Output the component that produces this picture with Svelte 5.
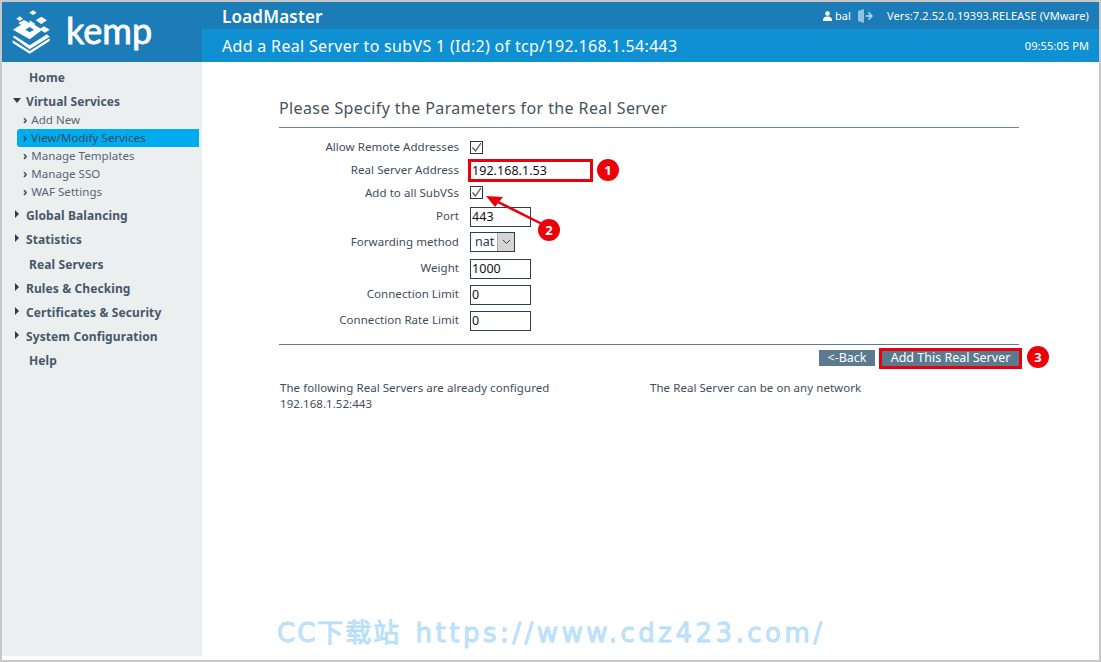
<script>
  const menu = [
    { label: 'Home', plain: true },
    { label: 'Virtual Services', open: true, items: [
      { label: 'Add New' },
      { label: 'View/Modify Services', active: true },
      { label: 'Manage Templates' },
      { label: 'Manage SSO' },
      { label: 'WAF Settings' }
    ] },
    { label: 'Global Balancing' },
    { label: 'Statistics' },
    { label: 'Real Servers', plain: true, nudge: true },
    { label: 'Rules & Checking' },
    { label: 'Certificates & Security' },
    { label: 'System Configuration' },
    { label: 'Help', plain: true }
  ];
</script>

{#snippet tick()}
  <svg width="11" height="11" viewBox="0 0 11 11"><path d="M1.500 5.500l3 3.500 5.500-8" fill="none" stroke="#555" stroke-width="1.300" /></svg>
{/snippet}

<div class="frame">
  <header class="top">
    <div class="logo">
      <svg width="50" height="50" viewBox="0 0 150 150">
        <g fill="#fff">
          <path d="M75 10l11 7-11 7-11-7z" />
          <path d="M100 29l17 11-17 11-17-11z" />
          <path d="M35 28l10 7-10 7-10-7z" />
          <path d="M65 40l17 11-3 2 24 15-38 29-50-29 24-15-8-5 17-9 17 9z" />
          <path d="M108 58l17 10-14 9-17-10z" />
          <path d="M14 90l6-4 45 29 52-33 8 7-60 38z" />
          <path d="M14 100l51 32 60-38v8l-60 38-51-32z" />
        </g>
        <path d="M65 60l13 8-13 8-13-8z" fill="#1b7cb8" />
      </svg>
      <span class="kemp">kemp</span>
    </div>
    <div class="bars">
      <div class="bar-a">
        <span class="product">LoadMaster</span>
        <span class="meta">
          <svg class="user" width="9" height="10" viewBox="0 0 9 10"><circle cx="4.500" cy="2.500" r="2.300" fill="#fff" /><path d="M0 10c0-3.500 1.500-4.500 4.500-4.500S9 6.500 9 10z" fill="#fff" /></svg>
          <span>bal</span>
          <svg class="logout" width="15" height="14" viewBox="0 0 15 14"><path d="M0 2l6-2v14l-6-2z" fill="#8cc4e8" /><path d="M8 7h5M10.500 3.500L14 7l-3.500 3.500" fill="none" stroke="#b8dcf2" stroke-width="1.500" /></svg>
          <span class="vers">Vers:7.2.52.0.19393.RELEASE (VMware)</span>
        </span>
      </div>
      <div class="bar-b">
        <span class="title">Add a Real Server to subVS 1 (Id:2) of tcp/192.168.1.54:443</span>
        <span class="clock">09:55:05 PM</span>
      </div>
    </div>
  </header>

  <div class="body">
    <nav class="side">
      {#each menu as m}
        <div class="group" class:plain={m.plain} class:nudge={m.nudge}>
          {#if !m.plain}
            <span class="caret" class:down={m.open}></span>
          {/if}
          {m.label}
        </div>
        {#if m.items}
          <div class="subs">
            {#each m.items as s}
              <div class="sub" class:active={s.active}><span class="chev">›</span>{s.label}</div>
            {/each}
          </div>
        {/if}
      {/each}
    </nav>

    <main class="main">
      <h1>Please Specify the Parameters for the Real Server</h1>

      <div class="form">
        <div class="row r-check"><label>Allow Remote Addresses</label><span class="check">{@render tick()}</span></div>
        <div class="row r-addr">
          <label>Real Server Address</label>
          <span class="field wide marked">192.168.1.53</span>
          <span class="num n1">1</span>
        </div>
        <div class="row r-check2">
          <label>Add to all SubVSs</label>
          <span class="check up">{@render tick()}</span>
          <svg class="arrow" width="62" height="36" viewBox="0 0 62 36">
            <path d="M58 30L10 6" stroke="#e8000b" stroke-width="2.500" fill="none" />
            <path d="M2 2l17 1-8 10z" fill="#e8000b" />
          </svg>
          <span class="num n2">2</span>
        </div>
        <div class="row r-port"><label>Port</label><span class="field">443</span></div>
        <div class="row r-fwd">
          <label>Forwarding method</label>
          <span class="select">
            <span class="sel-val">nat</span>
            <span class="sel-btn"><svg width="9" height="6" viewBox="0 0 9 6"><path d="M1 1l3.500 3.500L8 1" fill="none" stroke="#444" /></svg></span>
          </span>
        </div>
        <div class="row r-num"><label>Weight</label><span class="field">1000</span></div>
        <div class="row r-num"><label>Connection Limit</label><span class="field">0</span></div>
        <div class="row r-num"><label>Connection Rate Limit</label><span class="field">0</span></div>
      </div>

      <div class="actions">
        <button class="btn back">&lt;-Back</button>
        <button class="btn add">Add This Real Server</button>
        <span class="num n3">3</span>
      </div>

      <div class="notes">
        <div class="note-l">The following Real Servers are already configured<br />192.168.1.52:443</div>
        <div class="note-r">The Real Server can be on any network</div>
      </div>

      <div class="mark">CC下载站 <span class="url">https://www.cdz423.com/</span></div>
    </main>
  </div>
</div>

<style>
  :global(body) {
    margin: 0;
    background: #fff;
  }

  .frame {
    box-sizing: border-box;
    width: 1101px;
    height: 662px;
    border: 2px solid #c9c9c9;
    font-family: "Noto Sans", "Open Sans", sans-serif;
    font-size: 11.5px;
    letter-spacing: 0.05px;
    color: #4a5a6a;
    display: flex;
    flex-direction: column;
    overflow: hidden;
  }

  .top {
    display: flex;
    height: 60px;
    background: #1b7cb8;
    color: #fff;
  }

  .logo {
    width: 200px;
    display: flex;
    align-items: center;
    padding-left: 6px;
    box-sizing: border-box;
    gap: 8px;
  }

  .kemp {
    font-family: Lato, "Open Sans", sans-serif;
    font-size: 36px;
    line-height: 44px;
    letter-spacing: 0;
    margin-top: -5px;
    -webkit-text-stroke: 0.8px #fff;
  }

  .bars {
    flex: 1;
    display: flex;
    flex-direction: column;
  }

  .bar-a {
    height: 27px;
    display: flex;
    align-items: center;
    justify-content: space-between;
    padding: 0 10px 0 20px;
  }

  .product {
    font-size: 17px;
    font-weight: 600;
    letter-spacing: 0.2px;
    margin-top: 2px;
  }

  .meta {
    display: flex;
    align-items: center;
    font-size: 11px;
    letter-spacing: 0.1px;
  }

  .user {
    margin-right: 3px;
  }

  .logout {
    margin: 0 14px 0 7px;
  }

  .bar-b {
    flex: 1;
    background: #0f90d3;
    display: flex;
    align-items: center;
    justify-content: space-between;
    padding: 0 10px 0 20px;
  }

  .title {
    font-size: 16px;
    letter-spacing: 0.32px;
  }

  .clock {
    font-size: 11px;
    letter-spacing: 0.1px;
  }

  .body {
    flex: 1;
    display: flex;
    position: relative;
    min-height: 0;
  }

  .side {
    width: 200px;
    box-sizing: border-box;
    height: 594px;
    background: #ebeff0;
    padding-top: 7px;
  }

  .group {
    height: 24px;
    line-height: 17px;
    font-size: 12px;
    font-weight: 700;
    color: #47586a;
    padding-left: 24px;
    position: relative;
    letter-spacing: 0.1px;
  }

  .group.plain {
    padding-left: 27px;
  }

  .group.nudge {
    margin-top: 1px;
  }

  .caret {
    position: absolute;
    left: 13px;
    top: 3px;
    border-left: 4px solid #2f3d4b;
    border-top: 4px solid transparent;
    border-bottom: 4px solid transparent;
  }

  .caret.down {
    left: 11px;
    top: 5px;
    border-top: 5px solid #2f3d4b;
    border-left: 4px solid transparent;
    border-right: 4px solid transparent;
    border-bottom: 0;
  }

  .subs {
    margin-top: -6px;
    margin-bottom: 6px;
  }

  .sub {
    height: 18px;
    line-height: 17px;
    margin-left: 15px;
    width: 182px;
    box-sizing: border-box;
    padding-left: 6px;
    color: #566675;
  }

  .sub.active {
    background: #00acf0;
    border-radius: 3px 0 0 3px;
    color: #3b4a58;
  }

  .chev {
    font-weight: 700;
    margin-right: 4px;
    color: #3b4a58;
  }

  .main {
    flex: 1;
    padding: 35px 0 0 77px;
    position: relative;
    color: #3e4d5c;
  }

  h1 {
    margin: 0;
    width: 740px;
    box-sizing: border-box;
    height: 31px;
    font-size: 16px;
    font-weight: 400;
    line-height: 22px;
    color: #47525c;
    letter-spacing: 0.39px;
    border-bottom: 1px solid #6b8494;
  }

  .form {
    width: 740px;
    height: 217px;
    box-sizing: border-box;
    padding-top: 8px;
    border-bottom: 1px solid #5f7c8c;
  }

  .row {
    display: flex;
    align-items: center;
    position: relative;
  }

  .r-check { height: 23px; }
  .r-addr { height: 23px; }
  .r-check2 { height: 23px; }
  .r-port { height: 23px; }
  .r-fwd { height: 28px; }
  .r-num { height: 26px; }

  label {
    width: 180px;
    text-align: right;
    margin-right: 11px;
    margin-bottom: 2px;
    flex: none;
  }

  .r-num label {
    margin-bottom: 4px;
  }

  .check {
    width: 11px;
    height: 11px;
    border: 1px solid #333;
    background: #fff;
    display: flex;
  }

  .check.up {
    margin-bottom: 2px;
  }

  .field {
    box-sizing: border-box;
    width: 61px;
    height: 20px;
    border: 1px solid #2c4054;
    padding-left: 1px;
    font-size: 12.5px;
    line-height: 18px;
    color: #111;
    background: #fff;
  }

  .field.wide {
    width: 125px;
    height: 23px;
    margin-left: -2px;
    line-height: 17px;
    padding-left: 1px;
  }

  .marked {
    border: 3px solid #e8000b;
  }

  .select {
    display: flex;
    width: 45px;
    height: 20px;
    box-sizing: border-box;
    border: 1px solid #2c4054;
    color: #2c3a48;
    font-size: 12.5px;
    line-height: 18px;
  }

  .sel-val {
    flex: 1;
    padding-left: 4px;
  }

  .sel-btn {
    width: 16px;
    background: #d4d4d4;
    border-left: 1px solid #aaa;
    display: flex;
    align-items: center;
    justify-content: center;
  }

  .num {
    position: absolute;
    z-index: 2;
    width: 22px;
    height: 22px;
    border-radius: 50%;
    background: #ee0008;
    color: #fff;
    font-size: 13px;
    font-weight: 700;
    line-height: 22px;
    text-align: center;
  }

  .n1 { left: 318px; top: 0; }
  .n2 { left: 259px; top: 37px; }
  .n3 { left: 748px; top: 1px; }

  .arrow {
    position: absolute;
    z-index: 1;
    left: 205px;
    top: 12px;
  }

  .actions {
    width: 740px;
    display: flex;
    justify-content: flex-end;
    align-items: center;
    gap: 4px;
    height: 26px;
    position: relative;
  }

  .btn {
    border: 0;
    background: #5b7a90;
    color: #fff;
    font-family: inherit;
    font-size: 12.5px;
    padding: 0;
    height: 16px;
    line-height: 16px;
  }

  .back {
    width: 56px;
  }

  .add {
    width: 143px;
    height: 21px;
    box-sizing: border-box;
    border: 3px solid #e8000b;
    margin-right: -3px;
    line-height: 14px;
  }

  .notes {
    display: flex;
    padding: 9px 0 0 1px;
    line-height: 16px;
  }

  .note-l {
    width: 370px;
  }

  .mark {
    position: absolute;
    left: 75px;
    top: 550px;
    font-family: "DejaVu Sans", "Noto Sans CJK SC", sans-serif;
    font-size: 26px;
    letter-spacing: 2px;
    white-space: nowrap;
    color: #c4e4fb;
    -webkit-text-stroke: 0.8px #b0dcfa;
  }

  .url {
    letter-spacing: 3.500px;
    margin-left: 4px;
  }
</style>
